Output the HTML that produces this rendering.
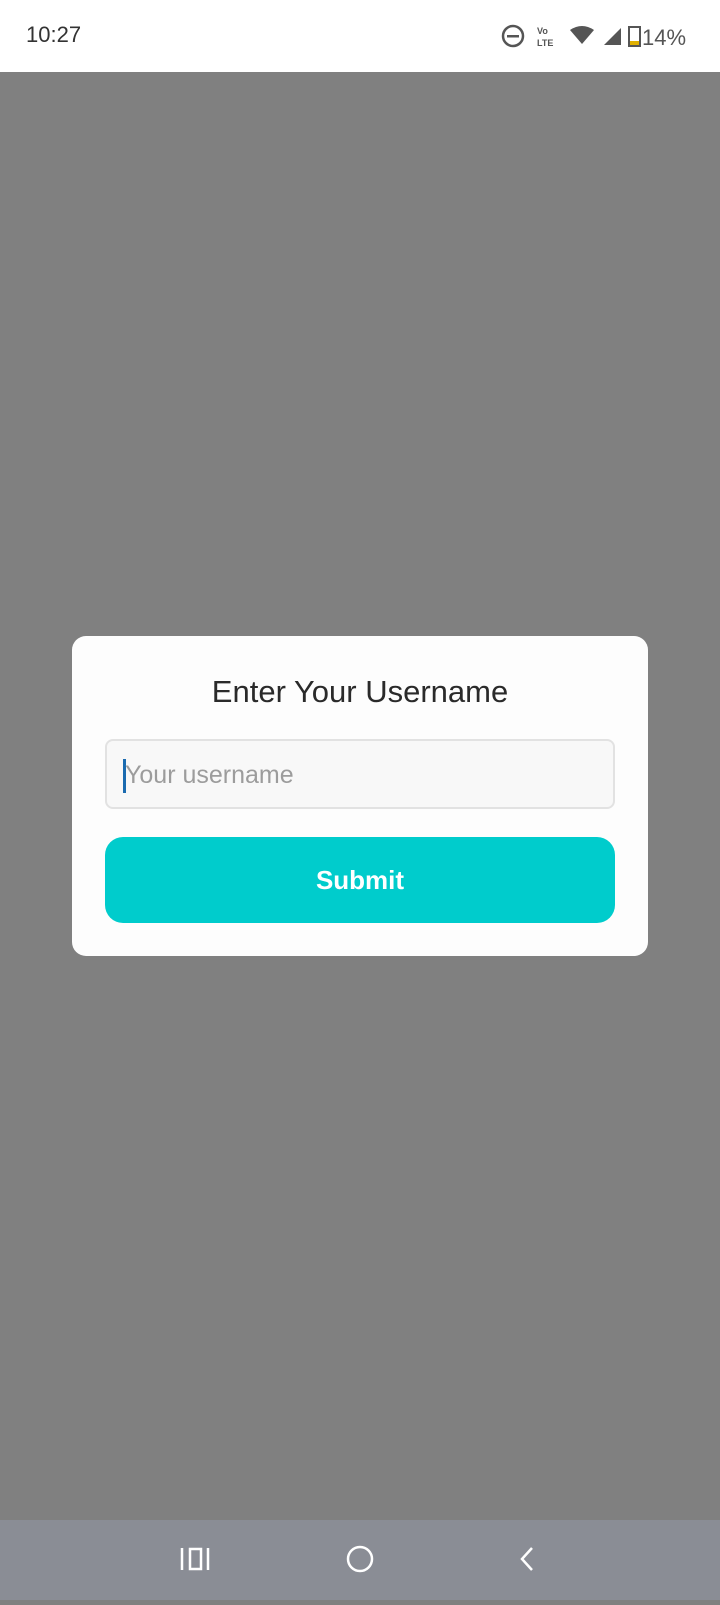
<!DOCTYPE html>
<html><head><meta charset="utf-8"><style>
body{margin:0;width:720px;height:1600px;position:relative;background:#808080;font-family:"Liberation Sans",sans-serif;overflow:hidden}
.sb{position:absolute;left:0;top:0;width:720px;height:72px;background:#fff}
.time{position:absolute;left:26px;top:22px;font-size:22px;color:#333}
.card{position:absolute;left:72px;top:636px;width:576px;height:320px;background:#fdfdfd;border-radius:14px}
.title{position:absolute;top:38px;width:100%;text-align:center;font-size:31px;color:#2a2a2a}
.inp{position:absolute;left:33px;top:103px;width:510px;height:70px;border:2px solid #e2e2e2;border-radius:8px;background:#f8f8f8;box-sizing:border-box}
.ph{position:absolute;left:18px;top:20px;font-size:25px;color:#9c9c9c}
.cur{position:absolute;left:16px;top:18px;width:3px;height:34px;background:#1b6bb0}
.btn{position:absolute;left:33px;top:201px;width:510px;height:86px;border-radius:18px;background:#00cccc;color:#fff;font-size:26px;font-weight:bold;text-align:center;line-height:86px}
.nav{position:absolute;left:0;top:1520px;width:720px;height:80px;background:#8a8d95}
</style></head><body>
<div class="sb"><div class="time">10:27</div>
<svg style="position:absolute;left:500px;top:22px" width="210" height="30">
<circle cx="13" cy="14" r="10" fill="none" stroke="#555" stroke-width="2.5"/><rect x="7" y="13" width="12" height="2.5" fill="#555"/>
<text x="37" y="12" font-size="9" fill="#555" font-weight="bold">Vo</text><text x="37" y="24" font-size="9" fill="#555" font-weight="bold">LTE</text>
<path d="M70 8 Q82 0 94 8 L82 22Z" fill="#555"/>
<path d="M104 23 L121 6 L121 23Z" fill="#555"/>
<rect x="129" y="5" width="11" height="19" fill="none" stroke="#555" stroke-width="2"/><rect x="130" y="19" width="9" height="4" fill="#e0b000"/>
<text x="142" y="23" font-size="22" fill="#555">14%</text>
</svg></div>
<div class="card">
<div class="title">Enter Your Username</div>
<div class="inp"><div class="cur"></div><div class="ph">Your username</div></div>
<div class="btn">Submit</div>
</div>
<div class="nav">
<svg width="720" height="80">
<g fill="none" stroke="#fff" stroke-width="2.5">
<line x1="182" y1="28" x2="182" y2="50"/><rect x="190" y="29" width="11" height="20"/><line x1="208" y1="28" x2="208" y2="50"/>
<circle cx="360" cy="39" r="12"/>
<path d="M532 28 L522 39 L532 50"/>
</g></svg></div>
</body></html>
